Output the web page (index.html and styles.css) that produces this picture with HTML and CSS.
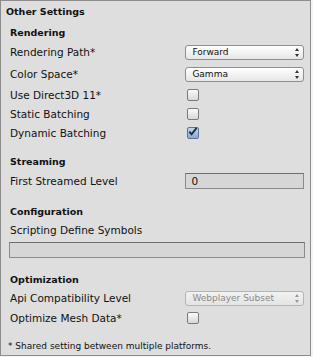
FILE: index.html
```html
<!DOCTYPE html>
<html lang="en">
<head>
    <meta charset="UTF-8">
    <title>Other Settings</title>
    <link rel="stylesheet" href="styles.css">
</head>
<body>
    <div class="panel">
        <div class="titulo">Other Settings</div>

        <div class="seccion">Rendering</div>
        <div class="fila fila-popup">
            <span class="etiqueta">Rendering Path*</span>
            <div class="popup"><span>Forward</span><span class="flechas"></span></div>
        </div>
        <div class="fila fila-popup">
            <span class="etiqueta">Color Space*</span>
            <div class="popup"><span>Gamma</span><span class="flechas"></span></div>
        </div>
        <div class="fila">
            <span class="etiqueta">Use Direct3D 11*</span>
            <span class="check"></span>
        </div>
        <div class="fila">
            <span class="etiqueta">Static Batching</span>
            <span class="check"></span>
        </div>
        <div class="fila">
            <span class="etiqueta">Dynamic Batching</span>
            <span class="check marcado">
                <svg width="12" height="12" viewBox="0 0 12 12"><path d="M2.5 5.5 L5 8.5 L10.5 1.5" fill="none" stroke="#1c2a40" stroke-width="2"/></svg>
            </span>
        </div>

        <div class="seccion espacio">Streaming</div>
        <div class="fila fila-popup">
            <span class="etiqueta">First Streamed Level</span>
            <div class="campo">0</div>
        </div>

        <div class="seccion espacio">Configuration</div>
        <div class="fila fila-alta">
            <span class="etiqueta">Scripting Define Symbols</span>
        </div>
        <div class="campo ancho"></div>

        <div class="seccion espacio-final">Optimization</div>
        <div class="fila fila-alta">
            <span class="etiqueta">Api Compatibility Level</span>
            <div class="popup desactivado"><span>Webplayer Subset</span><span class="flechas"></span></div>
        </div>
        <div class="fila fila-alta">
            <span class="etiqueta">Optimize Mesh Data*</span>
            <span class="check"></span>
        </div>

        <div class="nota">* Shared setting between multiple platforms.</div>
    </div>
</body>
</html>
```
FILE: styles.css
```css
body {
    margin: 0;
    background-color: #f4f4f4;
    font-family: "DejaVu Sans", sans-serif;
    font-size: 10.5px;
    color: #111;
}
.panel {
    box-sizing: border-box;
    width: 311px;
    height: 356px;
    background-color: #dedede;
    border: 1px solid #8c8c8c;
    padding: 2px 6px 0 8px;
}
.titulo {
    font-weight: bold;
    font-size: 9.5px;
    height: 18px;
    line-height: 18px;
    margin-left: -3px;
}
.seccion {
    font-weight: bold;
    font-size: 9.5px;
    height: 16px;
    line-height: 16px;
    margin-top: 4px;
    margin-left: 1px;
}
.seccion.espacio {
    margin-top: 12px;
}
.seccion.espacio-final {
    margin-top: 14px;
}
.fila {
    display: flex;
    align-items: center;
    height: 19px;
    padding-left: 1px;
}
.fila-popup {
    height: 22px;
}
.fila-alta {
    height: 20px;
}
.etiqueta {
    width: 176px;
    white-space: nowrap;
}
.popup {
    box-sizing: border-box;
    width: 119px;
    height: 15px;
    border: 1px solid #8f8f8f;
    border-radius: 3px;
    background: linear-gradient(#ffffff, #e6e6e6);
    display: flex;
    align-items: center;
    justify-content: space-between;
    padding: 0 6px;
    font-size: 9px;
}
.popup.desactivado {
    color: #8a8a8a;
    border-color: #b4b4b4;
    background: linear-gradient(#f2f2f2, #e4e4e4);
}
.flechas {
    width: 0;
    height: 9px;
    position: relative;
}
.flechas::before, .flechas::after {
    content: "";
    position: absolute;
    left: -2px;
    border-left: 2.5px solid transparent;
    border-right: 2.5px solid transparent;
}
.flechas::before {
    top: 0;
    border-bottom: 3px solid #333;
}
.flechas::after {
    bottom: 0;
    border-top: 3px solid #333;
}
.desactivado .flechas::before {
    border-bottom-color: #999;
}
.desactivado .flechas::after {
    border-top-color: #999;
}
.check {
    box-sizing: border-box;
    width: 12px;
    height: 12px;
    margin-left: 1px;
    border: 1px solid #7a7a7a;
    border-radius: 2px;
    background: linear-gradient(#fbfbfb, #d8d8d8);
    display: flex;
}
.check.marcado {
    background: linear-gradient(#c4d4ec, #8ea8d2);
    border-color: #5f7396;
}
.check svg {
    margin: -2px 0 0 -1px;
}
.campo {
    box-sizing: border-box;
    width: 119px;
    height: 16px;
    border: 1px solid #8a8a8a;
    border-top-color: #6e6e6e;
    background-color: #d6d6d6;
    padding-left: 5px;
    line-height: 14px;
}
.campo.ancho {
    width: 296px;
    margin-top: 2px;
}
.nota {
    font-size: 9px;
    line-height: 10px;
    margin-top: 13px;
    margin-left: -1px;
}
```
